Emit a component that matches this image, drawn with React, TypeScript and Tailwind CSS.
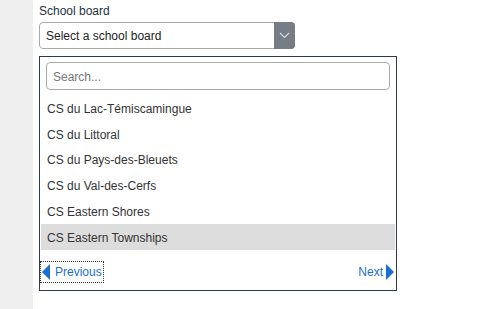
export default function App() {
  const boards = [
    "CS du Lac-Témiscamingue",
    "CS du Littoral",
    "CS du Pays-des-Bleuets",
    "CS du Val-des-Cerfs",
    "CS Eastern Shores",
    "CS Eastern Townships",
  ];

  return (
    <div className="flex min-h-[309px] w-[478px] bg-white font-['Liberation_Sans',Arial,sans-serif] text-[12px]">
      <div className="w-[33px] shrink-0 bg-[#efefef]" />
      <div className="pl-[6px] pt-[4px]">
        <label className="block leading-[14px] text-[#24313f]">School board</label>

        <div className="mt-[4px] flex h-[27px] w-[256px] rounded-[4px] border border-[#aaaaaa] bg-white">
          <div className="flex flex-1 items-center pl-[6px] pt-px text-[#222]">Select a school board</div>
          <div className="-my-px -mr-px flex w-[21px] items-center justify-center rounded-r-[4px] bg-[#777d86]">
            <svg width="11" height="7" viewBox="0 0 11 7" fill="none">
              <polyline points="1,1 5.5,5.5 10,1" stroke="#d6d9dd" strokeWidth="1.2" />
            </svg>
          </div>
        </div>

        <div className="mt-[7px] w-[358px] border border-[#2f3b47] bg-white">
          <div className="px-[6px] pt-[5px]">
            <div className="flex h-[28px] items-center rounded-[4px] border border-[#aaaaaa] pl-[6px] pt-px text-[#777]">
              Search...
            </div>
          </div>

          <ul className="mx-px mt-[5px]">
            {boards.map((b, i) => (
              <li
                key={b}
                className={
                  "flex h-[25.8px] items-center pl-[6px] pt-[2px] text-[#333] " +
                  (i === boards.length - 1 ? "bg-[#dddddd]" : "")
                }
              >
                {b}
              </li>
            ))}
          </ul>

          <div className="mt-[11px] flex items-center justify-between pb-[7px] pr-[2px]">
            <button className="flex h-[22px] items-center gap-[5px] border border-dotted border-[#333] pl-px pr-[1px] pt-px text-[#1b6fd1]">
              <svg width="8" height="16" viewBox="0 0 8 16">
                <polygon points="8,0 0,8 8,16" fill="#1b6fd1" />
              </svg>
              <span>Previous</span>
            </button>
            <button className="flex h-[22px] items-center gap-[3px] pt-px text-[#1b6fd1]">
              <span>Next</span>
              <svg width="8" height="16" viewBox="0 0 8 16">
                <polygon points="0,0 8,8 0,16" fill="#1b6fd1" />
              </svg>
            </button>
          </div>
        </div>
      </div>
    </div>
  );
}
